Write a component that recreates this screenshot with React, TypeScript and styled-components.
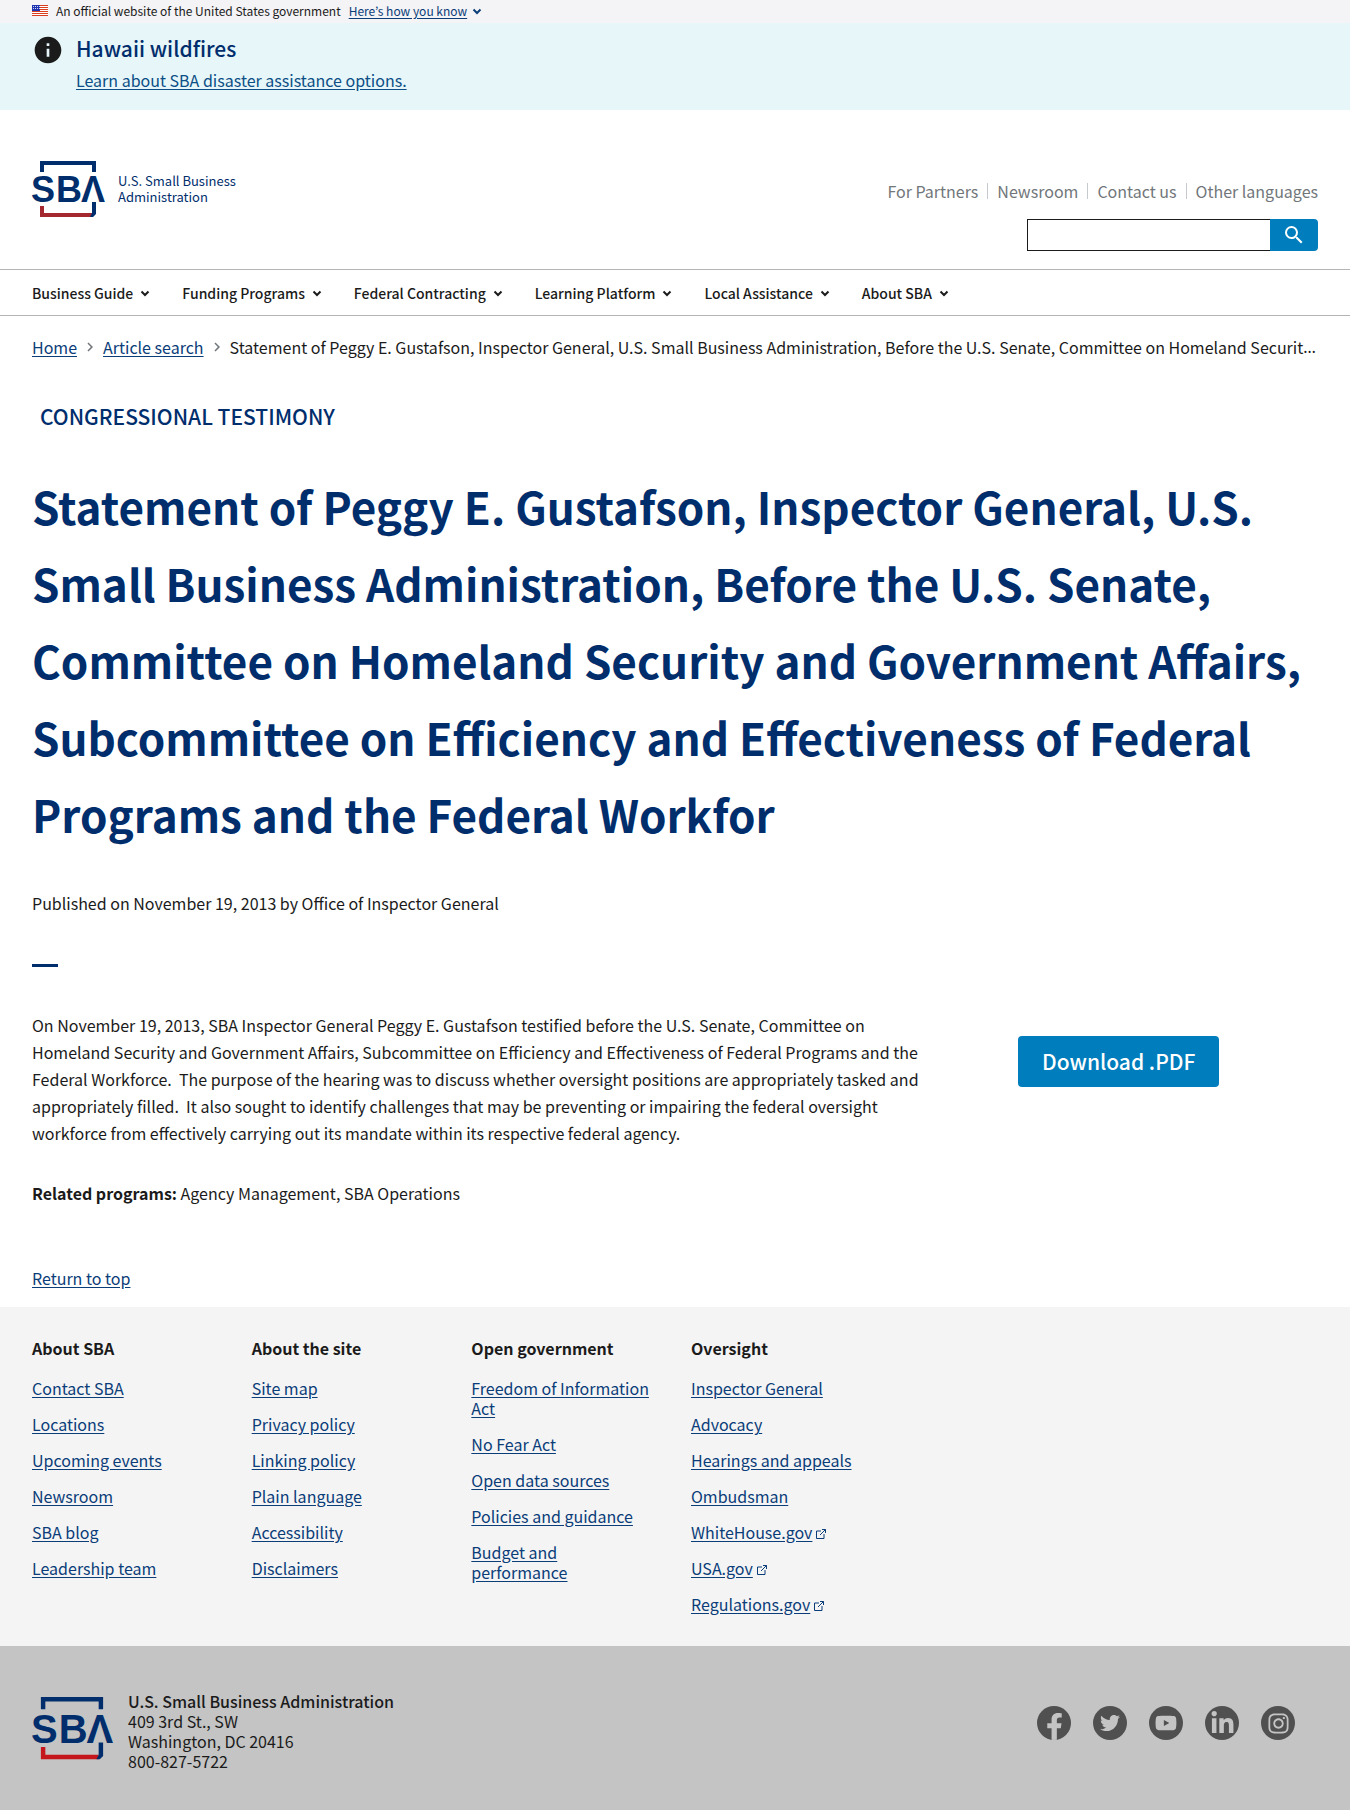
import React from "react";
import styled, { createGlobalStyle } from "styled-components";
import { MdSearch, MdNavigateNext, MdInfo } from "react-icons/md";
import { FaTwitter, FaYoutube, FaLinkedinIn, FaInstagram, FaFacebookF } from "react-icons/fa";

const navy = "#002e6d";
const link = "#0b3d79";
const blue = "#007dbc";
const ink = "#1b1b1b";
const sans = `"Noto Sans CJK KR", "Noto Sans", sans-serif`;

const GlobalStyle = createGlobalStyle`
  *, *::before, *::after { box-sizing: border-box; }
  body {
    margin: 0;
    background: #fff;
    color: ${ink};
    font-family: ${sans};
    font-size: 16px;
    line-height: 20px;
  }
  h1, h2, h3, p, ul, ol { margin: 0; padding: 0; }
  ul, ol { list-style: none; }
  button, input { font: inherit; }
`;

const TextLink = styled.a`
  color: ${link};
  text-decoration: underline;
  text-underline-offset: 2px;
`;

const GovBanner = styled.div`
  display: flex;
  align-items: center;
  height: 23px;
  padding: 0 32px 2px;
  background: #f4f3f5;
  font-size: 12px;
`;

const Flag = styled.svg`
  width: 16px;
  height: 11px;
  margin-right: 8px;
`;

const BannerButton = styled.button`
  display: flex;
  align-items: center;
  gap: 2px;
  margin-left: 8px;
  padding: 0;
  border: 0;
  background: none;
  color: ${link};
  cursor: pointer;

  span {
    text-decoration: underline;
    text-underline-offset: 2px;
  }
`;

const Alert = styled.section`
  display: flex;
  gap: 12px;
  padding: 9px 32px 14px;
  background: #e7f6f8;

  > svg {
    margin-top: 2px;
  }
`;

const AlertTitle = styled.h2`
  color: ${navy};
  font-size: 21px;
  font-weight: 500;
  line-height: 32px;
`;

const AlertLink = styled(TextLink)`
  color: #0b4f86;
  line-height: 32px;
`;

const Header = styled.header`
  display: flex;
  align-items: flex-start;
  justify-content: space-between;
  padding: 51px 32px 18px;
`;

const Brand = styled.a`
  display: flex;
  align-items: center;
  gap: 14px;
  color: ${navy};
  font-size: 13px;
  line-height: 16px;
  text-decoration: none;
`;

const LogoArt = styled.svg<{ $width: number }>`
  display: block;
  width: ${(p) => p.$width}px;
  height: auto;
  flex: none;
  overflow: visible;
`;

const HeaderTools = styled.div`
  display: flex;
  flex-direction: column;
  align-items: flex-end;
  gap: 18px;
  padding-top: 20px;
`;

const UtilityList = styled.ul`
  display: flex;

  li + li {
    display: flex;
    align-items: center;
  }
  li + li::before {
    content: "";
    width: 1px;
    height: 16px;
    margin: 0 9px;
    background: #c6cace;
  }
  a {
    color: #71767a;
    text-decoration: none;
  }
`;

const SearchForm = styled.form`
  display: flex;
  width: 291px;
  height: 32px;

  input {
    flex: 1;
    min-width: 0;
    border: 1px solid ${ink};
    border-right: 0;
    border-radius: 0;
    padding: 0 8px;
  }
  button {
    display: flex;
    align-items: center;
    justify-content: center;
    width: 48px;
    padding: 0;
    border: 0;
    border-radius: 0 4px 4px 0;
    background: ${blue};
    color: #fff;
    cursor: pointer;
  }
`;

const MainNav = styled.nav`
  padding: 0 32px;
  border-top: 1px solid #b4b4b4;
  border-bottom: 1px solid #b4b4b4;

  ul {
    display: flex;
    gap: 29px;
  }
  button {
    display: flex;
    align-items: center;
    gap: 4px;
    height: 45px;
    padding: 0;
    border: 0;
    background: none;
    color: ${ink};
    font-size: 14px;
    font-weight: 500;
    white-space: nowrap;
    cursor: pointer;
  }
`;

const Breadcrumb = styled.ol`
  display: flex;
  align-items: center;
  padding: 19px 32px 21px;
  line-height: 24px;

  li {
    display: flex;
    align-items: center;
    flex: none;
  }
  svg {
    margin: 0 4px;
    color: #71767a;
  }
`;

/* The ellipsis takes this item's own font, which sets its dots on the baseline. */
const CurrentPage = styled.li`
  && {
    display: block;
    flex: 0 1 auto;
    overflow: hidden;
    white-space: nowrap;
    text-overflow: ellipsis;
    font-family: "Noto Sans", sans-serif;
  }
  span {
    font-family: ${sans};
    vertical-align: top;
  }
`;

const Article = styled.main`
  padding: 0 32px 15px;
`;

const Kicker = styled.p`
  padding: 20px 8px 36px;
  color: ${navy};
  font-size: 21px;
  font-weight: 500;
  line-height: 32px;
  text-transform: uppercase;
`;

const Title = styled.h1`
  color: ${navy};
  font-size: 44px;
  font-weight: 700;
  line-height: 77px;
`;

const Published = styled.p`
  margin-top: 40px;
`;

const Rule = styled.hr`
  width: 26px;
  height: 3px;
  margin: 51px 0 45px;
  border: 0;
  background: ${navy};
`;

const Columns = styled.div`
  display: grid;
  grid-template-columns: minmax(0, 1fr) 300px;
  gap: 80px;
`;

const Summary = styled.p`
  padding-bottom: 36px;
  line-height: 27px;
  white-space: pre-wrap;
`;

const Download = styled.a`
  display: inline-block;
  margin-top: 24px;
  padding: 0 24px;
  border-radius: 4px;
  background: ${blue};
  color: #fff;
  font-size: 21px;
  font-weight: 500;
  line-height: 51px;
  text-decoration: none;
`;

const ReturnTop = styled.p`
  margin-top: 62px;
  line-height: 27px;
`;

const FooterLinks = styled.nav`
  display: grid;
  grid-template-columns: repeat(6, minmax(0, 1fr));
  gap: 32px;
  padding: 31px 32px 32px;
  background: #f4f4f4;

  h3 {
    margin-bottom: 20px;
    font-size: 16px;
    font-weight: 700;
    line-height: 20px;
  }
  ul {
    padding-right: 8px;
  }
  li {
    margin-bottom: 16px;
  }
  li:last-child {
    margin-bottom: 0;
  }
  svg {
    margin-left: 3px;
    vertical-align: -1px;
    color: ${link};
  }
`;

const FooterBottom = styled.footer`
  display: flex;
  justify-content: space-between;
  align-items: flex-start;
  padding: 45px 55px 39px 32px;
  background: #c4c4c4;
`;

const Agency = styled.div`
  display: flex;
  align-items: flex-start;
  gap: 16px;

  svg {
    margin-top: 6px;
  }
  address {
    font-style: normal;
  }
  strong {
    display: block;
    font-weight: 500;
  }
`;

const SocialList = styled.ul`
  display: flex;
  gap: 22px;
  padding-top: 15px;
`;

const SocialLink = styled.a<{ $sink?: boolean }>`
  display: flex;
  align-items: ${(p) => (p.$sink ? "flex-end" : "center")};
  justify-content: center;
  width: 34px;
  height: 34px;
  border-radius: 50%;
  overflow: hidden;
  background: #505050;
  color: #c4c4c4;
`;

function Logo({ width, red }: { width: number; red: string }) {
  return (
    <LogoArt $width={width} viewBox="0 0 72 56" role="img" aria-label="SBA">
      <path d="M10 11V2H62V11" fill="none" stroke={navy} strokeWidth="4" />
      <path d="M10 45V54H60" fill="none" stroke={red} strokeWidth="4" />
      <path d="M60 41H64V53L61 56H58L60 52Z" fill={navy} />
      <text
        y="41"
        fill={navy}
        fontFamily="Liberation Sans, sans-serif"
        fontWeight="700"
        fontSize="36"
      >
        <tspan x="-1">S</tspan>
        <tspan x="24">B</tspan>
        <tspan x="49">Λ</tspan>
      </text>
    </LogoArt>
  );
}

function Chevron() {
  return (
    <svg width="16" height="16" viewBox="0 0 16 16" fill="none" stroke="currentColor" strokeWidth="2" aria-hidden="true">
      <path d="M4.500 6.500L8 10L11.500 6.500" />
    </svg>
  );
}

function ExternalIcon() {
  return (
    <svg width="12" height="12" viewBox="0 0 12 12" fill="none" stroke="currentColor" aria-hidden="true">
      <path d="M6 3H1.500V10.500H9V6M7 1.500H10.500V5M10.500 1.500L5 7" />
    </svg>
  );
}

const utilities = ["For Partners", "Newsroom", "Contact us", "Other languages"];
const sections = [
  "Business Guide",
  "Funding Programs",
  "Federal Contracting",
  "Learning Platform",
  "Local Assistance",
  "About SBA",
];
const title =
  "Statement of Peggy E. Gustafson, Inspector General, U.S. Small Business Administration, Before the U.S. Senate, Committee on Homeland Security and Government Affairs, Subcommittee on Efficiency and Effectiveness of Federal Programs and the Federal Workfor";
const summary =
  "On November 19, 2013, SBA Inspector General Peggy E. Gustafson testified before the U.S. Senate, Committee on Homeland Security and Government Affairs, Subcommittee on Efficiency and Effectiveness of Federal Programs and the Federal Workforce.\u00a0 The purpose of the hearing was to discuss whether oversight positions are appropriately tasked and appropriately filled.\u00a0 It also sought to identify challenges that may be preventing or impairing the federal oversight workforce from effectively carrying out its mandate within its respective federal agency.";

const footerColumns: { heading: string; links: string[] }[] = [
  {
    heading: "About SBA",
    links: ["Contact SBA", "Locations", "Upcoming events", "Newsroom", "SBA blog", "Leadership team"],
  },
  {
    heading: "About the site",
    links: ["Site map", "Privacy policy", "Linking policy", "Plain language", "Accessibility", "Disclaimers"],
  },
  {
    heading: "Open government",
    links: [
      "Freedom of Information Act",
      "No Fear Act",
      "Open data sources",
      "Policies and guidance",
      "Budget and performance",
    ],
  },
  {
    heading: "Oversight",
    links: [
      "Inspector General",
      "Advocacy",
      "Hearings and appeals",
      "Ombudsman",
      "WhiteHouse.gov",
      "USA.gov",
      "Regulations.gov",
    ],
  },
];

const social = [
  { name: "Facebook", icon: <FaFacebookF size={27} />, sink: true },
  { name: "Twitter", icon: <FaTwitter size={20} /> },
  { name: "YouTube", icon: <FaYoutube size={22} /> },
  { name: "LinkedIn", icon: <FaLinkedinIn size={25} /> },
  { name: "Instagram", icon: <FaInstagram size={23} /> },
];

export default function App() {
  return (
    <>
      <GlobalStyle />
      <GovBanner>
        <Flag viewBox="0 0 16 11" aria-hidden="true">
          <rect width="16" height="11" fill="#fff" />
          <path d="M0 .5H16M0 2.500H16M0 4.500H16M0 6.500H16M0 8.500H16M0 10.500H16" stroke="#db3e1f" />
          <rect width="8" height="6" fill="#1e33b1" />
          <path d="M1 1.500H8M1 3.500H8" stroke="#fff" strokeDasharray="1 1" strokeWidth=".8" />
        </Flag>
        <span>An official website of the United States government</span>
        <BannerButton type="button">
          <span>Here’s how you know</span>
          <Chevron />
        </BannerButton>
      </GovBanner>

      <Alert>
        <MdInfo size={32} aria-hidden="true" />
        <div>
          <AlertTitle>Hawaii wildfires</AlertTitle>
          <AlertLink href="#disaster">Learn about SBA disaster assistance options.</AlertLink>
        </div>
      </Alert>

      <Header>
        <Brand href="#home">
          <Logo width={72} red="#a3282f" />
          <span>
            U.S. Small Business
            <br />
            Administration
          </span>
        </Brand>
        <HeaderTools>
          <UtilityList>
            {utilities.map((u) => (
              <li key={u}>
                <a href="#utility">{u}</a>
              </li>
            ))}
          </UtilityList>
          <SearchForm role="search" onSubmit={(e) => e.preventDefault()}>
            <input type="search" aria-label="Search" />
            <button type="submit" aria-label="Submit search">
              <MdSearch size={24} />
            </button>
          </SearchForm>
        </HeaderTools>
      </Header>

      <MainNav aria-label="Main">
        <ul>
          {sections.map((s) => (
            <li key={s}>
              <button type="button">
                {s}
                <Chevron />
              </button>
            </li>
          ))}
        </ul>
      </MainNav>

      <Breadcrumb>
        <li>
          <TextLink href="#home">Home</TextLink>
          <MdNavigateNext size={18} />
        </li>
        <li>
          <TextLink href="#search">Article search</TextLink>
          <MdNavigateNext size={18} />
        </li>
        <CurrentPage>
          <span>{title}</span>
        </CurrentPage>
      </Breadcrumb>

      <Article>
        <Kicker>Congressional Testimony</Kicker>
        <Title>{title}</Title>
        <Published>Published on November 19, 2013 by Office of Inspector General</Published>
        <Rule />
        <Columns>
          <div>
            <Summary>{summary}</Summary>
            <p>
              <strong>Related programs:</strong> Agency Management, SBA Operations
            </p>
          </div>
          <div>
            <Download href="#pdf">Download .PDF</Download>
          </div>
        </Columns>
        <ReturnTop>
          <TextLink href="#top">Return to top</TextLink>
        </ReturnTop>
      </Article>

      <FooterLinks aria-label="Footer">
        {footerColumns.map((col) => (
          <div key={col.heading}>
            <h3>{col.heading}</h3>
            <ul>
              {col.links.map((l) => (
                <li key={l}>
                  <TextLink href="#footer">{l}</TextLink>
                  {l.endsWith(".gov") && <ExternalIcon />}
                </li>
              ))}
            </ul>
          </div>
        ))}
      </FooterLinks>

      <FooterBottom>
        <Agency>
          <Logo width={80} red="#c4161c" />
          <address>
            <strong>U.S. Small Business Administration</strong>
            409 3rd St., SW
            <br />
            Washington, DC 20416
            <br />
            800-827-5722
          </address>
        </Agency>
        <SocialList>
          {social.map((s) => (
            <li key={s.name}>
              <SocialLink href="#social" aria-label={s.name} $sink={s.sink}>
                {s.icon}
              </SocialLink>
            </li>
          ))}
        </SocialList>
      </FooterBottom>
    </>
  );
}
